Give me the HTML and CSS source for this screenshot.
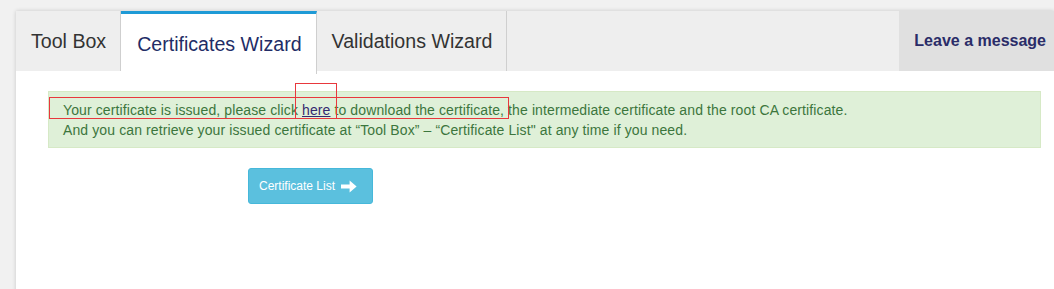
FILE: index.html
```html
<!DOCTYPE html>
<html>
<head>
<title>Certificates Wizard</title>
<link rel="stylesheet" href="styles.css">
</head>
<body>

<div class="page">
   <div class="tabs">
      <div class="tab">Tool Box</div>
      <div class="tab active">Certificates Wizard</div>
      <div class="tab">Validations Wizard</div>
      <div class="leave">Leave a message</div>
   </div>

   <div class="alert">
      Your certificate is issued, please click <a href="#">here</a> to download the certificate, the intermediate certificate and the root CA certificate.<br>
      And you can retrieve your issued certificate at &ldquo;Tool Box&rdquo; &ndash; &ldquo;Certificate List" at any time if you need.
      <span class="mark mark-line"></span>
      <span class="mark mark-link"></span>
   </div>

   <button class="btn">Certificate List
      <svg class="arrow" width="16" height="13" viewBox="0 0 16 13">
         <path d="M0 4.4 H8.6 V0.6 L15.6 6.5 L8.6 12.4 V8.6 H0 Z" fill="#fff"/>
      </svg>
   </button>
</div>

</body>
</html>
```

FILE: styles.css
```css
BODY {
   margin : 0;
   padding : 11px 0 0 16px;
   background-color : #f1f1f1;
   font-family : "Liberation Sans", Arial, helvetica, sans-serif;
   overflow : hidden;
}

.page {
   background-color : #fff;
   height : 300px;
   box-shadow : 0 0 4px rgba(0, 0, 0, 0.18);
}

.tabs {
   display : flex;
   align-items : flex-start;
   height : 60px;
   background-color : #eee;
}

.tab {
   padding : 0 14px 0 15px;
   line-height : 60px;
   font-size : 19.6px;
   color : #333;
   border-right : 1px solid #cfcfcf;
}

.tab.active {
   padding : 0 14px 0 16px;
   background-color : #fff;
   color : #222c66;
   border-top : 3px solid #1e9ad6;
}

.leave {
   margin-left : auto;
   padding : 0 8px 0 15px;
   line-height : 60px;
   font-size : 16px;
   font-weight : bold;
   color : #2a2c68;
   background-color : #e0e0e0;
}

.alert {
   position : relative;
   margin : 20px 13px 0 32px;
   padding : 8px 15px 7px 14px;
   font-size : 14px;
   letter-spacing : 0.11px;
   line-height : 20px;
   color : #3c763d;
   background-color : #dff0d8;
   border : 1px solid #d6e9c6;
}

.alert A {
   color : #352a70;
   text-decoration : underline;
}

.mark {
   position : absolute;
   border : 1px solid #e8383d;
}

.mark-line {
   left : 0;
   top : 5px;
   width : 458px;
   height : 20px;
}

.mark-link {
   left : 246px;
   top : -9px;
   width : 40px;
   height : 34px;
}

.btn {
   display : flex;
   align-items : center;
   gap : 6px;
   margin : 20px 0 0 232px;
   width : 125px;
   height : 36px;
   padding : 0 0 0 10px;
   font-family : "Liberation Sans", Arial, helvetica, sans-serif;
   font-size : 12px;
   color : #fff;
   background-color : #5bc0de;
   border : 1px solid #46b8da;
   border-radius : 3px;
}

.arrow {
   display : block;
}
```
